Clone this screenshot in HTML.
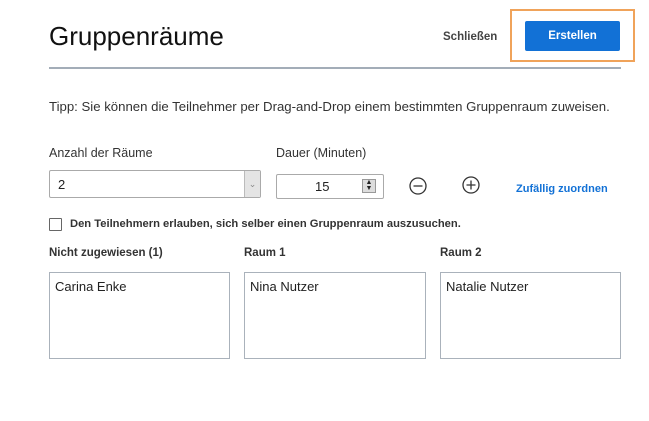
<!DOCTYPE html>
<html><head><style>
body{margin:0;width:649px;height:421px;background:#fff;font-family:"Liberation Sans",sans-serif;color:#222;position:relative;overflow:hidden}
.a{position:absolute;white-space:nowrap}
.box{position:absolute;top:272px;width:180px;height:87px;border:1px solid #aab2bb;box-sizing:border-box;font-size:13px;padding:6px 5px}
.h{font-size:11.5px;font-weight:bold;top:247px;color:#333}
</style></head><body>
<div class="a" style="left:49px;top:21px;font-size:26px;color:#111">Gruppenräume</div>
<div class="a" style="left:443px;top:31px;font-size:11.5px;font-weight:bold;color:#444">Schließen</div>
<div class="a" style="left:510px;top:9px;width:121px;height:49px;border:2px solid #f0a35a"></div>
<div class="a" style="left:525px;top:21px;width:95px;height:30px;background:#1271d6;border-radius:2px;color:#fff;font-size:11.5px;font-weight:bold;text-align:center;line-height:31px">Erstellen</div>
<div class="a" style="left:49px;top:67px;width:572px;height:2px;background:#a3adb8"></div>
<div class="a" style="left:49px;top:99px;font-size:13.2px;color:#333">Tipp: Sie können die Teilnehmer per Drag-and-Drop einem bestimmten Gruppenraum zuweisen.</div>
<div class="a" style="left:49px;top:146px;font-size:12.5px;color:#333">Anzahl der Räume</div>
<div class="a" style="left:276px;top:146px;font-size:12.5px;color:#333">Dauer (Minuten)</div>
<div class="a" style="left:49px;top:170px;width:212px;height:28px;border:1px solid #aaa;box-sizing:border-box;border-radius:2px"><span style="position:absolute;left:8px;top:6px;font-size:13px">2</span><div style="position:absolute;right:0;top:0;width:15px;height:26px;background:#e4e4e4;border-left:1px solid #bbb;color:#888;font-size:9px;text-align:center;line-height:26px">⌄</div></div>
<div class="a" style="left:276px;top:174px;width:108px;height:25px;border:1px solid #aaa;box-sizing:border-box;border-radius:2px"><span style="position:absolute;left:38px;top:4px;font-size:13px">15</span><div style="position:absolute;left:85px;top:4px;width:14px;height:14px;background:#ddd;border:1px solid #999;box-sizing:border-box;font-size:7px;line-height:6px;text-align:center">▲<br>▼</div></div>
<svg class="a" style="left:408px;top:176px" width="20" height="20"><circle cx="10" cy="10" r="8" fill="none" stroke="#333" stroke-width="1.3"/><path d="M5.5 10h9" stroke="#333" stroke-width="1.3"/></svg>
<svg class="a" style="left:461px;top:175px" width="20" height="20"><circle cx="10" cy="10" r="8" fill="none" stroke="#333" stroke-width="1.3"/><path d="M5.5 10h9M10 5.5v9" stroke="#333" stroke-width="1.3"/></svg>
<div class="a" style="left:516px;top:183px;font-size:11px;font-weight:bold;color:#1271d6">Zufällig zuordnen</div>
<div class="a" style="left:49px;top:218px;width:13px;height:13px;border:1px solid #666;box-sizing:border-box;border-radius:1px"></div>
<div class="a" style="left:70px;top:218px;font-size:11.2px;font-weight:bold;color:#333">Den Teilnehmern erlauben, sich selber einen Gruppenraum auszusuchen.</div>
<div class="a h" style="left:49px">Nicht zugewiesen (1)</div>
<div class="a h" style="left:244px">Raum 1</div>
<div class="a h" style="left:440px">Raum 2</div>
<div class="box" style="left:49px;width:181px">Carina Enke</div>
<div class="box" style="left:244px;width:182px">Nina Nutzer</div>
<div class="box" style="left:440px;width:181px">Natalie Nutzer</div>
</body></html>
